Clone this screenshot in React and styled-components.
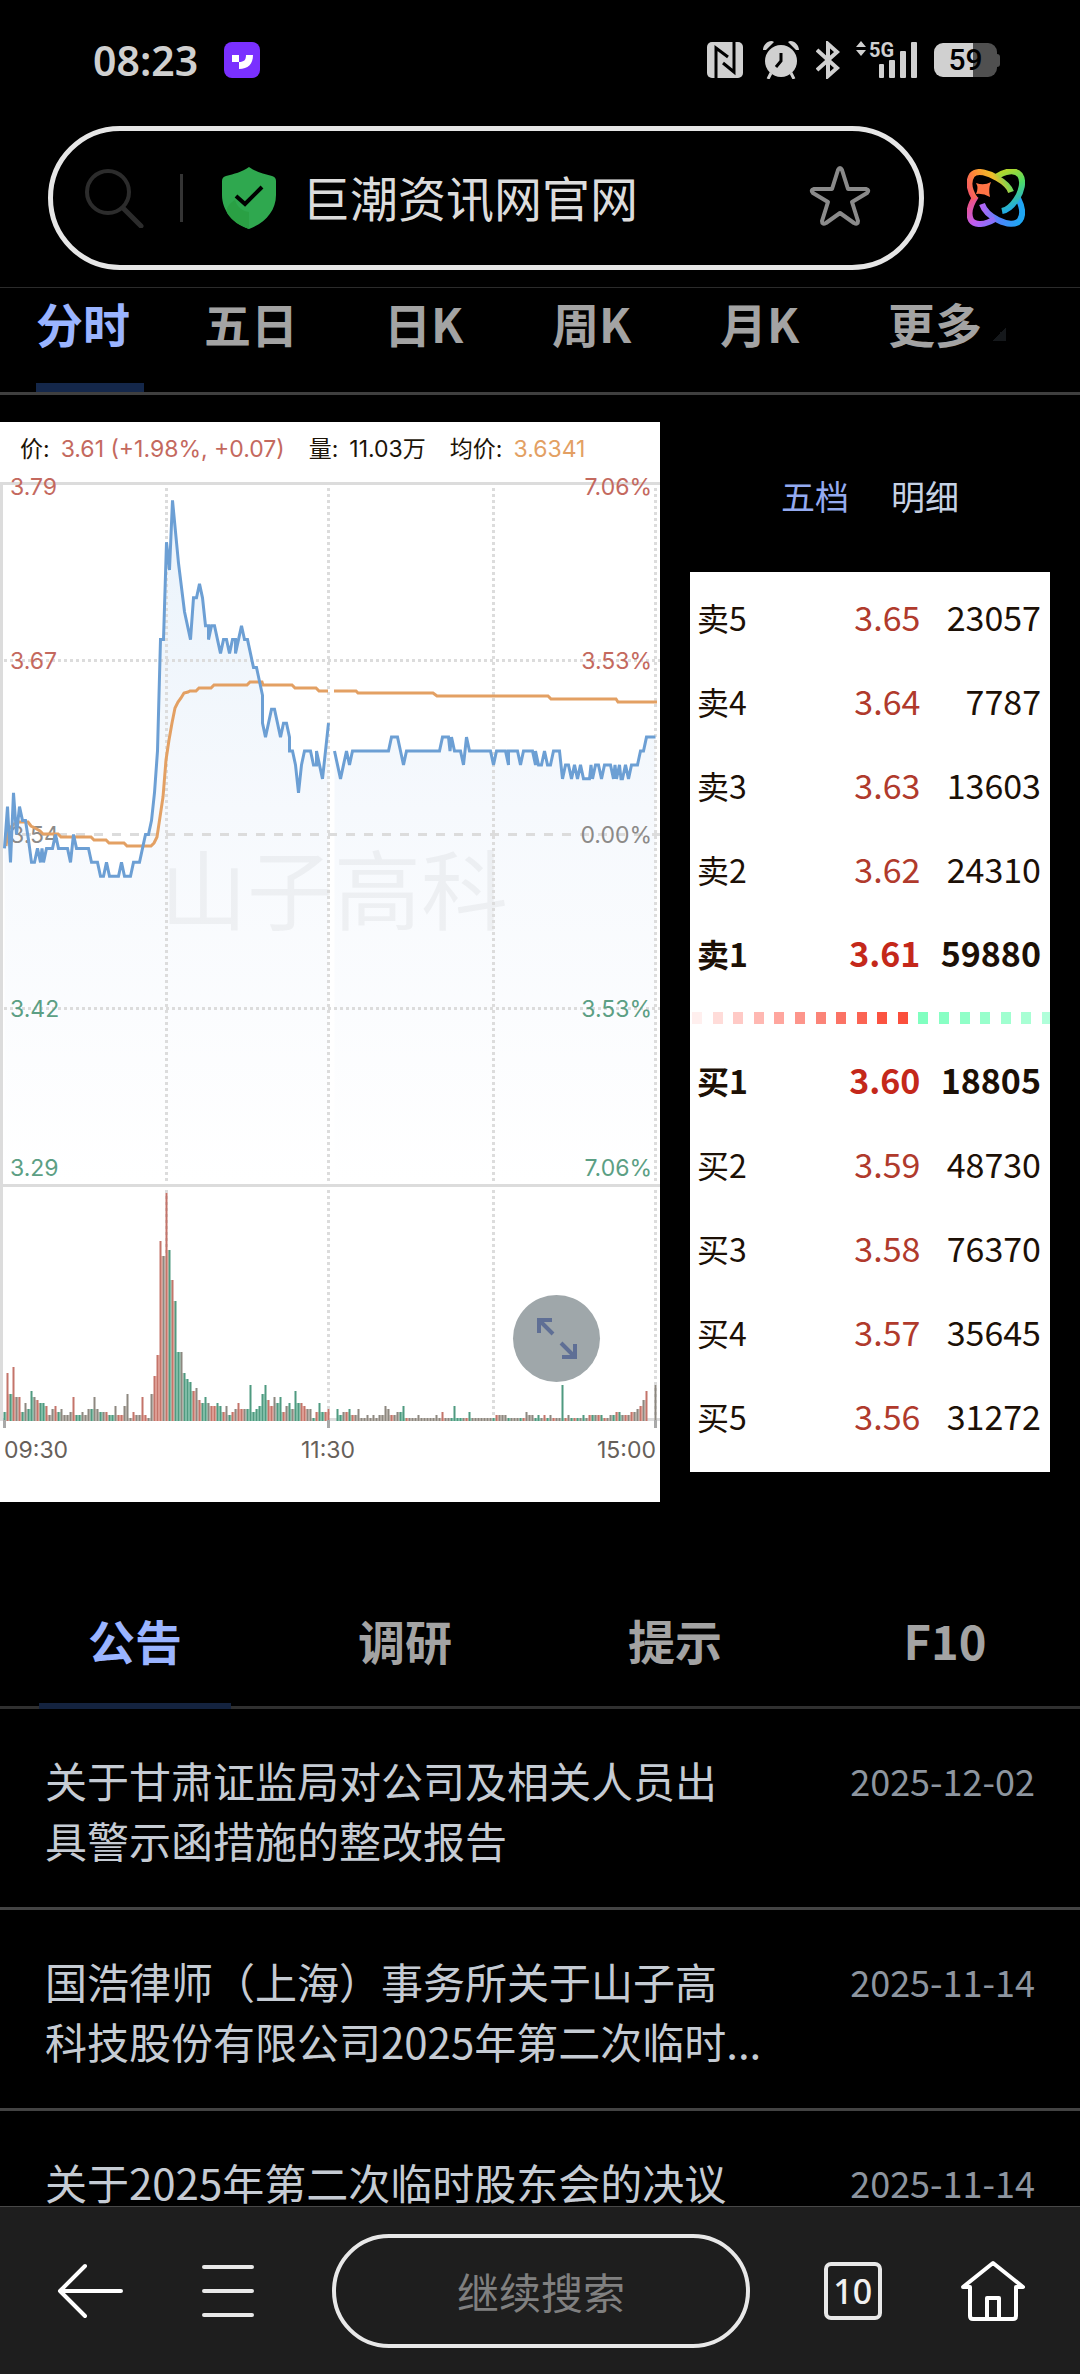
import React from "react";
import styled, { createGlobalStyle } from "styled-components";

const GlobalStyle = createGlobalStyle`
  * {
    box-sizing: border-box;
  }
  body {
    margin: 0;
    background: #000;
    font-family: "Noto Sans CJK SC", sans-serif;
  }
  button, input {
    margin: 0;
    padding: 0;
    border: 0;
    background: none;
    font: inherit;
    color: inherit;
  }
`;

const Screen = styled.div`
  display: flex;
  flex-direction: column;
  height: 100vh;
  overflow: hidden;
`;

const StatusBar = styled.div`
  display: flex;
  align-items: center;
  flex: none;
  height: 122px;
  padding: 0 80px 0 93px;
  color: #d0d0d0;
`;

const Clock = styled.time`
  flex: 1;
  display: flex;
  align-items: center;
  gap: 26px;
  padding-bottom: 2px;
  font-family: "Noto Sans", sans-serif;
  font-size: 41px;
  font-weight: 600;
  line-height: 48px;
`;

const StatusIcons = styled.div`
  display: flex;
  align-items: center;
  gap: 16px;
  padding-bottom: 2px;
`;

const Battery = styled.div`
  display: flex;
  align-items: center;
`;

const BatteryBody = styled.span`
  width: 63px;
  height: 34px;
  border-radius: 9px;
  background: linear-gradient(to right, #d0d0d0 62%, #505050 62%);
  color: #000;
  font-family: Roboto, sans-serif;
  font-size: 30px;
  font-weight: 500;
  line-height: 34px;
  text-align: center;
`;

const BatteryNub = styled.span`
  width: 3px;
  height: 13px;
  border-radius: 0 3px 3px 0;
  background: #505050;
`;

const AddressRow = styled.form`
  display: flex;
  align-items: center;
  flex: none;
  gap: 43px;
  padding: 4px 55px 17px 48px;
  border-bottom: 1px solid #2b2b2b;
`;

const AddressBox = styled.div`
  flex: 1;
  min-width: 0;
  display: flex;
  align-items: center;
  height: 144px;
  padding: 0 48px 0 32px;
  border: 5px solid #e6e6e6;
  border-radius: 72px;
`;

const AddressDivider = styled.span`
  width: 3px;
  height: 48px;
  margin: 0 39px 0 36px;
  background: #343434;
`;

const AddressInput = styled.input`
  flex: 1;
  min-width: 0;
  margin-left: 26px;
  padding-bottom: 4px;
  outline: none;
  color: #dcdcdc;
  font-size: 48px;
  line-height: 60px;
`;

const IconButton = styled.button`
  display: flex;
  align-items: center;
  justify-content: center;
`;

const Page = styled.main`
  flex: 1;
  min-height: 0;
  overflow: hidden;
`;

const PeriodTabs = styled.nav`
  display: grid;
  grid-template-columns: 168fr 180fr 168fr 168fr 168fr 156fr;
  padding: 0 36px;
  border-bottom: 3px solid #3f3f3f;
`;

const PeriodTab = styled.button`
  display: flex;
  align-items: center;
  justify-self: start;
  gap: 10px;
  min-width: 108px;
  height: 104px;
  padding-bottom: 26px;
  border-bottom: 9px solid ${(p) => (p.$active ? "#14274a" : "transparent")};
  color: ${(p) => (p.$active ? "#9ab4ff" : "#a3a3a3")};
  font-size: 47px;
  font-weight: 700;
  line-height: 60px;
`;

const MoreMark = styled.span`
  width: 14px;
  height: 14px;
  align-self: end;
  margin-bottom: 16px;
  background: linear-gradient(135deg, transparent 50%, #15181b 50%);
`;

const Quote = styled.section`
  display: grid;
  grid-template-columns: 11fr 6fr;
  align-items: start;
  gap: 30px;
  padding: 27px 30px 0 0;
`;

const ChartPanel = styled.div`
  position: relative;
  background: #fff;
  font-family: Inter, "Noto Sans CJK SC", sans-serif;
  font-size: 23px;

  svg {
    display: block;
    width: 100%;
  }
`;

const Legend = styled.div`
  display: flex;
  align-items: center;
  gap: 24px;
  height: 48px;
  padding: 2px 0 0 20px;
  color: #1c1408;
  white-space: nowrap;
`;

const LegendItem = styled.span`
  display: flex;
  align-items: baseline;
  gap: 11px;
`;

const LegendValue = styled.span`
  color: ${(p) => p.$color || "inherit"};
`;

const ExpandButton = styled.button`
  position: absolute;
  right: 60px;
  bottom: 120px;
  width: 87px;
  height: 87px;
  border-radius: 50%;
  background: #9fa7aa;
`;

const BookTabs = styled.div`
  display: flex;
  align-items: center;
  justify-content: center;
  gap: 42px;
  height: 150px;
  padding-bottom: 4px;
`;

const BookTab = styled.button`
  color: ${(p) => (p.$active ? "#94aaf0" : "#c6d2e4")};
  font-size: 34px;
`;

const BookPanel = styled.div`
  padding: 4px 0 13px;
  background: #fff;
`;

const Book = styled.table`
  width: 100%;
  border-collapse: collapse;
  table-layout: fixed;
  color: #1c1006;
  font-size: 34px;
  line-height: 48px;
`;

const BookRow = styled.tr`
  height: 84px;
  font-weight: ${(p) => (p.$best ? 700 : 400)};
`;

const BookLabel = styled.th`
  width: 30%;
  padding: 0 0 2px 7px;
  font-size: 32px;
  font-weight: inherit;
  text-align: left;
`;

const BookPrice = styled.td`
  width: 34%;
  padding: 0 0 2px;
  color: ${(p) => (p.$best ? "#c4281a" : "#b03a2c")};
  text-align: right;
`;

const BookVolume = styled.td`
  padding: 0 9px 2px 0;
  text-align: right;
`;

const StripCell = styled.td`
  height: 43px;
  padding: 0;
`;

const Strip = styled.div`
  display: grid;
  grid-template-columns: repeat(17, 1fr) 8px;
  padding-left: 2px;
`;

const Dot = styled.span`
  max-width: 10px;
  height: 12px;
  background: ${(p) => p.$color};
`;

const NewsTabs = styled.nav`
  display: grid;
  grid-template-columns: repeat(4, 1fr);
  margin-top: 72px;
  border-bottom: 3px solid #303030;
`;

const NewsTab = styled.button`
  justify-self: center;
  width: 192px;
  height: 135px;
  margin-bottom: -3px;
  padding-top: 1px;
  border-bottom: 6px solid ${(p) => (p.$active ? "#14233f" : "transparent")};
  color: ${(p) => (p.$active ? "#9ab4ff" : "#a3a3a3")};
  font-size: 47px;
  font-weight: 700;
`;

const NewsList = styled.ul`
  margin: 0;
  padding: 0;
  list-style: none;
`;

const NewsItem = styled.li`
  display: flex;
  justify-content: space-between;
  height: 201px;
  padding: 41px 45px 0;
  border-bottom: 3px solid #434343;
  font-size: 42px;
  line-height: 60px;
`;

const NewsLink = styled.a`
  width: 74%;
  color: #c5cbd3;
  text-decoration: none;
  white-space: pre-line;
`;

const NewsDate = styled.time`
  color: #8d959f;
  font-size: 36px;
`;

const BottomBar = styled.footer`
  display: flex;
  align-items: center;
  justify-content: space-between;
  flex: none;
  height: 168px;
  padding: 0 54px 0 56px;
  border-top: 1px solid #484848;
  background: #1e1e1e;
  color: #fff;
`;

const SearchAgain = styled.button`
  width: 43%;
  height: 114px;
  margin: 0 -4px 0 0;
  border: 4px solid #e8e8e8;
  border-radius: 57px;
  color: #808080;
  font-size: 42px;
`;

const TabCount = styled.button`
  width: 58px;
  height: 58px;
  border: 4px solid #e8e8e8;
  border-radius: 7px;
  color: #f0f0f0;
  font-family: "Noto Sans", sans-serif;
  font-size: 34px;
  font-weight: 500;
  line-height: 48px;
`;

const periods = ["分时", "五日", "日K", "周K", "月K"];

const asks = [
  ["卖5", "3.65", "23057"],
  ["卖4", "3.64", "7787"],
  ["卖3", "3.63", "13603"],
  ["卖2", "3.62", "24310"],
  ["卖1", "3.61", "59880"],
];

const bids = [
  ["买1", "3.60", "18805"],
  ["买2", "3.59", "48730"],
  ["买3", "3.58", "76370"],
  ["买4", "3.57", "35645"],
  ["买5", "3.56", "31272"],
];

const dots = [
  "#ffefee", "#ffdcd9", "#ffcac6", "#ffb8b2", "#ffa69e", "#fd958b",
  "#fb8478", "#fb7365", "#fb6453", "#fb5341", "#fb4f3c", "#80ffc0",
  "#88ffc4", "#90ffc8", "#98ffcc", "#a0ffd0", "#a8ffd4", "#b0ffda",
];

const news = [
  {
    title: "关于甘肃证监局对公司及相关人员出\n具警示函措施的整改报告",
    date: "2025-12-02",
  },
  {
    title: "国浩律师（上海）事务所关于山子高\n科技股份有限公司2025年第二次临时...",
    date: "2025-11-14",
  },
  { title: "关于2025年第二次临时股东会的决议", date: "2025-11-14" },
];

// "slot:price" pairs, price in cents
const morning =
  "0:353 1:356 2:352 3:357 4:354 5:356 6:355 7:355 8:353.6 9:352 10:352 11:353 12:352 12.5:353 13:352 14:353 16:353 17:354 18:353 21:353 22:352 23:354 24:353 28:353 29:352 31:352 32:351 33:351 34:352 35:351 38:351 39:352 40:351 42:351 43:352 45:352 46:353 47:354 48:354 49:355 50:357 51:360 52:368 53:368 54:375 55:373 56:378 58:373.5 60:370 62:368 63:371 64:371 65:372 66:371 67:369 68:369 68:368 69:369 70:369 71:368 72:367 73:368 74:368 75:367 76:368 77:368 77:367 78:368 79:369 80:368 81:368 83:366 84:366 86:364 86:362 87:361 89:363 90:363 92:361 93:362 94:362 95:361 95:360 96:360 97:359 98:357 99:359 100:360 102:360 103:359 104:359 104:360 105:359 106:358 108:362";
const afternoon =
  "110:360 111:359 112:358 113:359 114:360 115:359 116:360 128:360 129:361 131:361 132:360 133:359 134:360 145:360 146:361 148:361 148.5:360 149:361 150:360 152:360 153:359 154:361 155:360 162:360 163:359 164:360 167:360 168:359 168:360 171:360 172:359 173:360 176:360 177:359 177:360 178:359 179:359 180:360 181:359 182:359 183:360 185:360 186:358 187:359 188:359 189:358 190:359 191:358 192:359 193:358 195:358 195.5:359 196:358 197:359 198:359 199:358 200:359 202:359 203:358 203.5:359 204:358 205:359 205.5:358 206:358 207:359 208:358 209:359 211:359 212:360 213:360 214:361 217:361";

// height and colour of each volume bar: r up, g down, k flat
const volumeAm =
  "3g 16r 9g 18r 8k 8r 3g 6k 4g 10g 8k 7r 6g 6g 5r 2k 4k 5r 3g 4k 2k 2k 3k 8r 2g 2g 3k 2k 4k 4g 8k 4k 3g 3k 3r 2g 2g 5k 2r 2r 5k 9k 1k 3r 2k 2k 8r 2r 1k 9k 15r 22r 60r 55k 76r 57g 47r 40g 23g 23k 16g 14g 13g 10r 11k 7r 6g 8g 6k 5r 5r 6g 5g 3r 5k 2g 3r 4k 6r 4r 4k 4g 12g 3g 4g 5g 9g 12g 7r 5r 8k 6g 8g 3r 5k 6g 4k 10g 6g 6r 5r 4k 4k 1g 3r 6g 3g 3r 4r";
const volumePm =
  "4g 2g 3k 3r 4g 2r 2k 4k 1k 1k 2k 1k 2k 1k 2k 2k 5k 4k 2r 2k 3k 3g 5g 1r 1k 1k 1k 2k 1k 1k 1k 1k 1k 2k 1k 3r 1k 1k 1g 5g 1g 1g 1k 1r 3g 1k 1k 1k 1k 1k 1k 1k 1g 2r 2k 2k 2k 1g 1k 1k 1k 1g 1r 3k 2k 2k 1g 2g 1k 2r 1g 2k 1r 1k 1k 12g 1r 2k 1g 1r 1g 1k 2g 1k 2r 2g 2k 2r 2g 1r 1k 2k 2g 3r 3g 2k 2r 2k 3r 3k 4k 5r 7k 10r 0k 0k 12k";

const barColors = {
  r: ["#c4746a", "#f6c4bd"],
  g: ["#4f9a80", "#b0dfcc"],
  k: ["#8d8880", "#d8d2cc"],
};

const slotX = (slot) => 4.5 + slot * 3;
const priceY = (price) => 412.5 - (price - 354) * 13.92;

const toPoints = (series) =>
  series
    .split(" ")
    .map((pair) => pair.split(":").map(Number))
    .map(([slot, price]) => `${slotX(slot)},${priceY(price)}`)
    .join(" ");

function VolumeBars({ data, start }) {
  const bars = data.split(" ").map((s) => [parseInt(s, 10), s.slice(-1)]);
  return bars.map(([h, kind], i) => {
    const next = bars[i + 1] ? bars[i + 1][0] : 0;
    const low = Math.min(h, next) * 3;
    const x = slotX(start + i);
    const [dark, pale] = barColors[kind];
    return (
      <g key={i}>
        <rect x={x} y={999 - low} width="3" height={low} fill={pale} />
        <rect x={x - 1} y={999 - h * 3} width="2" height={h * 3} fill={dark} />
      </g>
    );
  });
}

function PriceArea({ series, from, to }) {
  return (
    <polygon
      points={`${slotX(from)},763 ${toPoints(series)} ${slotX(to)},763`}
      fill="url(#area)"
    />
  );
}

function PriceLines() {
  return (
    <g fill="none" strokeWidth="3">
      <path
        stroke="#e3a063"
        d="M6 424L8 408L14 402L19 400H28L31 404L35 406L40 409L43 412H58L61 415H91L94 418H106L109 421H124L127 424H151L154 421L157 415L160 395L163 375L166 338L169 318L172 301L175 286L178 280L181 276L184 271L188 270L190 269H196L199 266H211L214 263H247L250 260H262L263 263H292L295 266H316L319 269H328M334 269H356L358 271H433L437 274H548L551 277H616L618 280H657"
      />
      <polyline points={toPoints(morning)} stroke="#6c9fd4" />
      <polyline points={toPoints(afternoon)} stroke="#6c9fd4" />
    </g>
  );
}

const leftLabels = [
  ["3.79", 73, "#c4695e"],
  ["3.67", 247, "#c4695e"],
  ["3.54", 421, "#8c8a88"],
  ["3.42", 595, "#5c9f84"],
  ["3.29", 754, "#5c9f84"],
];
const rightLabels = [
  ["7.06%", 73, "#c4695e"],
  ["3.53%", 247, "#c4695e"],
  ["0.00%", 421, "#8c8a88"],
  ["3.53%", 595, "#5c9f84"],
  ["7.06%", 754, "#5c9f84"],
];

function Chart() {
  return (
    <svg viewBox="0 48 660 1032" role="img" aria-label="分时图">
      <defs>
        <linearGradient id="area" gradientUnits="userSpaceOnUse" x1="0" y1="80" x2="0" y2="763">
          <stop offset="0" stopColor="#eaf3fb" />
          <stop offset="0.45" stopColor="#f6f9fd" />
          <stop offset="1" stopColor="#ffffff" />
        </linearGradient>
      </defs>
      <PriceArea series={morning} from={0} to={108} />
      <PriceArea series={afternoon} from={110} to={217} />
      <text x="160" y="502" fontSize="87" fill="#000" fillOpacity="0.045">
        山子高科
      </text>
      <g stroke="#dcdcdc" strokeWidth="3" fill="none">
        <path d="M1.5 998V61.5H660M0 763.5H660M0 997.5H660" />
        <path
          d="M166.5 66V996M328.5 66V996M493.5 66V996M655.5 66V996M4 238.5H660M4 586.5H660"
          strokeDasharray="3 3"
        />
        <path d="M4 412.5H660" strokeDasharray="9 9" />
      </g>
      <VolumeBars data={volumeAm} start={0} />
      <VolumeBars data={volumePm} start={111} />
      <path d="M4.5 998V1006M328.5 998V1006M655.5 998V1006" stroke="#a9a9a9" strokeWidth="3" />
      {leftLabels.map(([text, y, color]) => (
        <text key={y} x="10" y={y} fill={color}>
          {text}
        </text>
      ))}
      {rightLabels.map(([text, y, color]) => (
        <text key={y} x="652" y={y} fill={color} textAnchor="end">
          {text}
        </text>
      ))}
      <PriceLines />
      <g fill="#66605a">
        <text x="4" y="1036">09:30</text>
        <text x="328" y="1036" textAnchor="middle">11:30</text>
        <text x="656" y="1036" textAnchor="end">15:00</text>
      </g>
    </svg>
  );
}

const StatusGlyphs = () => (
  <StatusIcons>
    <svg width="36" height="36" viewBox="0 0 36 36" aria-label="NFC">
      <rect width="36" height="36" rx="5" fill="#d0d0d0" />
      <path d="M9 36V6L21 15M27 0V30L16 21" fill="none" stroke="#000" strokeWidth="3" />
    </svg>
    <svg width="41" height="38" viewBox="-4 0 41 38" fill="#d0d0d0" aria-label="闹钟">
      <circle cx="18" cy="20" r="16" />
      <path d="M0 9C0 3 7-2 11 1L3 9ZM36 9C36 3 29-2 25 1L33 9Z" />
      <path d="M8 32L5 38M28 32L31 38" stroke="#d0d0d0" strokeWidth="3" />
      <path d="M18 12V20L13 26" fill="none" stroke="#000" strokeWidth="3" />
    </svg>
    <svg width="24" height="38" viewBox="0 0 24 38" fill="none" stroke="#d0d0d0" strokeWidth="4" aria-label="蓝牙">
      <path d="M1 9L21 27L12 35V3L21 11L1 29" />
    </svg>
    <svg width="62" height="46" viewBox="0 -4 62 46" fill="#d0d0d0" aria-label="信号">
      <path d="M0 6L5 0L10 6ZM0 9L5 15L10 9Z" />
      <text x="13" y="16" fontSize="20" fontWeight="700" fontFamily="Roboto, sans-serif">
        5G
      </text>
      <rect x="23" y="23" width="5" height="14" rx="1" />
      <rect x="33" y="19" width="6" height="18" rx="1" />
      <rect x="44" y="10" width="6" height="27" rx="1" />
      <rect x="55" y="1" width="6" height="36" rx="1" />
    </svg>
    <Battery>
      <BatteryBody>59</BatteryBody>
      <BatteryNub />
    </Battery>
  </StatusIcons>
);

const AppBadge = () => (
  <svg width="36" height="36" viewBox="0 0 36 36">
    <rect width="36" height="36" rx="8" fill="#7a30ff" />
    <path d="M8 13H15V20H8ZM22 13H29C29 22 24 27 15 27V20C20 20 22 18 22 13Z" fill="#fff" />
  </svg>
);

const SearchIcon = () => (
  <svg width="59" height="60" viewBox="0 0 59 60" fill="none" stroke="#2c2c2c" strokeWidth="4">
    <circle cx="23" cy="24" r="21" />
    <path d="M38 40L56 58" strokeWidth="5" strokeLinecap="round" />
  </svg>
);

const ShieldIcon = () => (
  <svg width="54" height="62" viewBox="0 0 54 62">
    <path
      d="M27 0C34 5 42 7 50 9Q54 10 54 14V28C54 44 43 56 27 62C11 56 0 44 0 28V14Q0 10 4 9C12 7 20 5 27 0Z"
      fill="#2fa84f"
    />
    <path d="M13 33C6 37 4 42 5 46C10 54 18 59 27 62V45C20 44 15 40 13 33Z" fill="#2aa044" />
    <path d="M14 29L23 37L40 20" fill="none" stroke="#000" strokeWidth="4" />
  </svg>
);

const StarIcon = () => (
  <svg width="62" height="64" viewBox="0 0 62 64" fill="none" stroke="#8a8a8a" strokeWidth="4" strokeLinejoin="round">
    <path d="M29 4Q31 0 33 4L39 23H57Q61 24 58 27L43 36L49 55Q49 59 45 57L31 47L17 57Q13 59 13 55L19 36L4 27Q1 24 5 23H23Z" />
  </svg>
);

const AssistantIcon = () => (
  <svg width="58" height="58" viewBox="0 0 58 58" fill="none" strokeWidth="6">
    <defs>
      <linearGradient id="warm" gradientUnits="userSpaceOnUse" x1="2" y1="30" x2="42" y2="12">
        <stop offset="0" stopColor="#f4506c" />
        <stop offset="0.35" stopColor="#ff8a36" />
        <stop offset="0.7" stopColor="#f0bc28" />
        <stop offset="1" stopColor="#6cd858" />
      </linearGradient>
      <linearGradient id="leaf" gradientUnits="userSpaceOnUse" x1="32" y1="4" x2="48" y2="42">
        <stop offset="0" stopColor="#b4d62c" />
        <stop offset="0.4" stopColor="#4edc64" />
        <stop offset="1" stopColor="#1ba4f4" />
      </linearGradient>
      <linearGradient id="sea" gradientUnits="userSpaceOnUse" x1="15" y1="38" x2="54" y2="44">
        <stop offset="0" stopColor="#b266f4" />
        <stop offset="0.5" stopColor="#4c86fc" />
        <stop offset="1" stopColor="#1fa6f2" />
      </linearGradient>
      <linearGradient id="plum" gradientUnits="userSpaceOnUse" x1="6" y1="28" x2="28" y2="54">
        <stop offset="0" stopColor="#f0527c" />
        <stop offset="0.6" stopColor="#c05cf0" />
        <stop offset="1" stopColor="#7a76fc" />
      </linearGradient>
    </defs>
    <path d="M51 29C55 37 57 45 53 51C49 57 39 55 31 51C23 47 17 41 15 35" stroke="url(#sea)" />
    <path d="M29 8C38 2 48 0 53 6C57 12 55 22 49 31C45 37 40 41 35 42" stroke="url(#leaf)" />
    <path d="M9 27C3 36 1 45 4 51C8 57 18 56 28 50" stroke="url(#plum)" />
    <path d="M8 30C2 21 1 12 5 6C10 0 22 4 30 9C37 13 42 17 44 23" stroke="url(#warm)" />
    <path d="M9 14Q17 17 24 13Q21 20 23 28Q16 24 9 25Q12 19 9 14Z" fill="#ff7446" />
  </svg>
);

function BookRows({ rows, best }) {
  return rows.map(([label, price, volume]) => (
    <BookRow key={label} $best={label === best}>
      <BookLabel scope="row">{label}</BookLabel>
      <BookPrice $best={label === best}>{price}</BookPrice>
      <BookVolume>{volume}</BookVolume>
    </BookRow>
  ));
}

export default function App() {
  return (
    <Screen>
      <GlobalStyle />
      <StatusBar>
        <Clock>
          08:23
          <AppBadge />
        </Clock>
        <StatusGlyphs />
      </StatusBar>
      <AddressRow>
        <AddressBox>
          <SearchIcon />
          <AddressDivider />
          <ShieldIcon />
          <AddressInput aria-label="网址" defaultValue="巨潮资讯网官网" />
          <IconButton type="button" aria-label="收藏">
            <StarIcon />
          </IconButton>
        </AddressBox>
        <IconButton type="button" aria-label="助手">
          <AssistantIcon />
        </IconButton>
      </AddressRow>
      <Page>
        <PeriodTabs>
          {periods.map((name, i) => (
            <PeriodTab key={name} $active={i === 0}>
              {name}
            </PeriodTab>
          ))}
          <PeriodTab>
            更多
            <MoreMark />
          </PeriodTab>
        </PeriodTabs>
        <Quote>
          <ChartPanel>
            <Legend>
              <LegendItem>
                <span>价:</span>
                <LegendValue $color="#c4695e">3.61 (+1.98%, +0.07)</LegendValue>
              </LegendItem>
              <LegendItem>
                <span>量:</span>
                <LegendValue>11.03万</LegendValue>
              </LegendItem>
              <LegendItem>
                <span>均价:</span>
                <LegendValue $color="#e3a063">3.6341</LegendValue>
              </LegendItem>
            </Legend>
            <Chart />
            <ExpandButton aria-label="全屏">
              <svg viewBox="0 0 87 87" fill="none" stroke="#5f6f95" strokeWidth="4">
                <path d="M40 39L26 25M26 38V25H39M48 48L62 62M62 49V62H49" />
              </svg>
            </ExpandButton>
          </ChartPanel>
          <div>
            <BookTabs>
              <BookTab $active>五档</BookTab>
              <BookTab>明细</BookTab>
            </BookTabs>
            <BookPanel>
              <Book>
                <tbody>
                  <BookRows rows={asks} best="卖1" />
                  <tr>
                    <StripCell colSpan={3}>
                      <Strip>
                        {dots.map((color) => (
                          <Dot key={color} $color={color} />
                        ))}
                      </Strip>
                    </StripCell>
                  </tr>
                  <BookRows rows={bids} best="买1" />
                </tbody>
              </Book>
            </BookPanel>
          </div>
        </Quote>
        <NewsTabs>
          <NewsTab $active>公告</NewsTab>
          <NewsTab>调研</NewsTab>
          <NewsTab>提示</NewsTab>
          <NewsTab>F10</NewsTab>
        </NewsTabs>
        <NewsList>
          {news.map((item) => (
            <NewsItem key={item.title}>
              <NewsLink href="#">{item.title}</NewsLink>
              <NewsDate>{item.date}</NewsDate>
            </NewsItem>
          ))}
        </NewsList>
      </Page>
      <BottomBar>
        <IconButton aria-label="返回">
          <svg width="68" height="58" viewBox="0 0 68 58" fill="none" stroke="#fff" strokeWidth="4" strokeLinecap="round" strokeLinejoin="round">
            <path d="M29 4L4 29L29 54M4 29H65" />
          </svg>
        </IconButton>
        <IconButton aria-label="菜单">
          <svg width="52" height="54" viewBox="0 0 52 54" stroke="#e8e8e8" strokeWidth="4" strokeLinecap="round">
            <path d="M2 3H50M2 27H50M2 51H50" />
          </svg>
        </IconButton>
        <SearchAgain>继续搜索</SearchAgain>
        <TabCount aria-label="标签页">10</TabCount>
        <IconButton aria-label="主页">
          <svg width="66" height="62" viewBox="0 0 66 62" fill="none" stroke="#fff" strokeWidth="4" strokeLinejoin="round" strokeLinecap="round">
            <path d="M10 27H3L33 3L63 27H56V56Q56 59 53 59H13Q10 59 10 56ZM27 59V38H39V59" />
          </svg>
        </IconButton>
      </BottomBar>
    </Screen>
  );
}
